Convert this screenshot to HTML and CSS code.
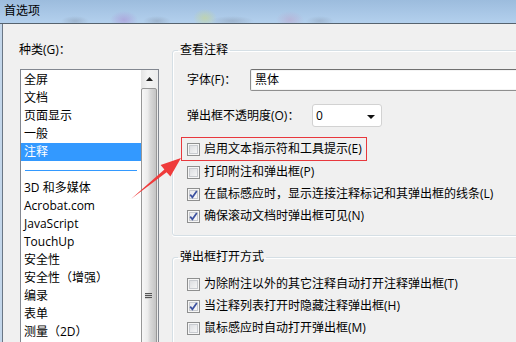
FILE: index.html
```html
<!DOCTYPE html>
<html lang="zh-CN">
<head>
<meta charset="utf-8">
<title>首选项</title>
<link rel="stylesheet" href="styles.css">
</head>
<body>
<div class="window">
  <div class="titlebar"><span class="title">首选项</span></div>
  <div class="frame">
    <div class="left">
      <div class="cat-label">种类(G)：</div>
      <div class="listbox">
        <ul class="items">
          <li>全屏</li>
          <li>文档</li>
          <li>页面显示</li>
          <li>一般</li>
          <li class="selected">注释</li>
          <li class="sep"></li>
          <li>3D 和多媒体</li>
          <li>Acrobat.com</li>
          <li>JavaScript</li>
          <li>TouchUp</li>
          <li>安全性</li>
          <li>安全性（增强）</li>
          <li>编录</li>
          <li>表单</li>
          <li>测量（2D）</li>
        </ul>
        <div class="scrollbar">
          <div class="sb-up"><svg width="7" height="4" viewBox="0 0 7 4"><path d="M0 4 L3.5 0 L7 4 Z" fill="#222"/></svg></div>
          <div class="sb-thumb"><span class="grip"></span></div>
        </div>
      </div>
    </div>
    <div class="right">
      <fieldset class="group">
        <legend>查看注释</legend>
        <div class="field-row">
          <span class="fl fl-font">字体(F)：</span>
          <div class="textbox">黑体</div>
        </div>
        <div class="field-row row-op">
          <span class="fl fl-op">弹出框不透明度(O)：</span>
          <div class="select">0<span class="caret"></span></div>
        </div>
        <div class="highlight">
          <div class="check-row"><span class="cb"></span>启用文本指示符和工具提示(E)</div>
        </div>
        <div class="check-row"><span class="cb"></span>打印附注和弹出框(P)</div>
        <div class="check-row"><span class="cb checked"><svg viewBox="0 0 11 11" width="11" height="11"><path d="M2.2 5.6 L4.4 8.3 L8.8 2" stroke="#3d52a0" stroke-width="1.7" fill="none"/></svg></span>在鼠标感应时，显示连接注释标记和其弹出框的线条(L)</div>
        <div class="check-row"><span class="cb checked"><svg viewBox="0 0 11 11" width="11" height="11"><path d="M2.2 5.6 L4.4 8.3 L8.8 2" stroke="#3d52a0" stroke-width="1.7" fill="none"/></svg></span>确保滚动文档时弹出框可见(N)</div>
      </fieldset>
      <fieldset class="group group2">
        <legend>弹出框打开方式</legend>
        <div class="check-row"><span class="cb"></span>为除附注以外的其它注释自动打开注释弹出框(T)</div>
        <div class="check-row"><span class="cb checked"><svg viewBox="0 0 11 11" width="11" height="11"><path d="M2.2 5.6 L4.4 8.3 L8.8 2" stroke="#3d52a0" stroke-width="1.7" fill="none"/></svg></span>当注释列表打开时隐藏注释弹出框(H)</div>
        <div class="check-row"><span class="cb"></span>鼠标感应时自动打开弹出框(M)</div>
      </fieldset>
    </div>
  </div>
  <svg class="arrow" width="516" height="342" viewBox="0 0 516 342">
    <polygon points="131,199 166.6,172.2 170.4,176.6 181,158 160.6,165 164.4,169.6" fill="#ef3b3b"/>
  </svg>
</div>
</body>
</html>
```
FILE: styles.css
```css
* { box-sizing: border-box; }

body {
  margin: 0;
  width: 516px;
  height: 342px;
  overflow: hidden;
  background: #f0f0f0;
  font-family: "Open Sans", "Noto Sans CJK SC", sans-serif;
  font-size: 12px;
  line-height: 18px;
  color: #000;
}

.window {
  position: relative;
  height: 342px;
}

.titlebar {
  height: 24px;
  border-bottom: 1px solid #56636f;
  padding-left: 4px;
  line-height: 22px;
  background:
    radial-gradient(ellipse 14px 9px at 124px 20px, rgba(170, 140, 210, 0.55), transparent),
    radial-gradient(ellipse 12px 9px at 205px 18px, rgba(200, 215, 140, 0.6), transparent),
    radial-gradient(ellipse 14px 9px at 290px 20px, rgba(190, 160, 200, 0.5), transparent),
    radial-gradient(ellipse 14px 5px at 75px 21px, rgba(120, 130, 150, 0.35), transparent),
    radial-gradient(ellipse 14px 5px at 157px 21px, rgba(120, 130, 150, 0.35), transparent),
    radial-gradient(ellipse 22px 5px at 232px 21px, rgba(120, 130, 150, 0.35), transparent),
    radial-gradient(ellipse 14px 5px at 320px 21px, rgba(120, 130, 150, 0.3), transparent),
    linear-gradient(#9cbcdd, #aac8e7 60%, #b3d0ed);
}

.title { color: #000; }

.frame {
  display: flex;
  height: 318px;
  padding-left: 3px;
  background: linear-gradient(to right, #c3d6ea 0, #c3d6ea 2px, #6a7684 2px, #6a7684 3px, #f0f0f0 3px);
}

.left {
  width: 169px;
  flex: none;
  padding: 17px 0 0 16px;
}

.cat-label { height: 18px; }

.listbox {
  margin: 10px 0 0 1px;
  width: 139px;
  height: 300px;
  border: 1px solid #828790;
  background: #fff;
  display: flex;
  overflow: hidden;
}

.items {
  list-style: none;
  margin: 0;
  padding: 1px 0 0;
  width: 120px;
  flex: none;
}

.items li {
  height: 18px;
  padding-left: 3px;
  white-space: nowrap;
}

.items li.selected {
  background: #3399ff;
  color: #fff;
}

.items li.sep {
  padding: 0;
  margin: 0 4px;
  background: linear-gradient(transparent 9px, #3399ff 9px, #3399ff 10px, transparent 10px);
}

.scrollbar {
  width: 17px;
  flex: none;
  background: linear-gradient(to right, #e4e4e4, #f4f4f4 40%, #ececec);
}

.sb-up {
  height: 17px;
  display: flex;
  align-items: center;
  justify-content: center;
  padding-top: 1px;
}

.sb-thumb {
  margin: 1px 0 0 0;
  width: 16px;
  height: 420px;
  border: 1px solid #979797;
  border-radius: 2px;
  background: linear-gradient(to right, #f7f7f7 0%, #ececec 40%, #d8d8d8 60%, #c4c4c4 100%);
  padding-top: 204px;
}

.grip {
  display: block;
  width: 7px;
  height: 6px;
  margin-left: 3px;
  background: repeating-linear-gradient(#555 0, #555 1px, #d0d0d0 1px, #d0d0d0 2px);
}

.right {
  flex: 1;
  min-width: 0;
  padding-top: 17px;
}

.group {
  width: 380px;
  margin: 0;
  padding: 10px 8px 8px 14px;
  border: 1px solid #d5dfe5;
  border-radius: 3px;
  box-shadow: inset 1px 1px 0 #fff, 0 1px 0 #fff;
}

.group legend {
  padding: 0 2px;
  margin-left: -9px;
  line-height: 18px;
}

.group2 {
  margin-top: 12px;
  padding-top: 7px;
}

.field-row {
  display: flex;
  align-items: center;
  height: 22px;
}

.row-op {
  margin-top: 13px;
  height: 23px;
}

.fl { flex: none; white-space: nowrap; }
.fl-font { width: 63px; }
.fl-op { width: 125px; }

.textbox {
  width: 300px;
  height: 22px;
  border: 1px solid #8f8f8f;
  border-top-color: #707070;
  border-radius: 2px;
  background: #fff;
  box-shadow: inset 0 0 0 1px #f4f4f4;
  padding-left: 4px;
  line-height: 20px;
}

.select {
  position: relative;
  width: 70px;
  height: 23px;
  border: 1px solid #d2d2d2;
  border-radius: 3px;
  background: #fff;
  padding-left: 3px;
  line-height: 21px;
}

.caret {
  position: absolute;
  right: 6px;
  top: 10px;
  width: 0;
  height: 0;
  border-left: 4px solid transparent;
  border-right: 4px solid transparent;
  border-top: 4px solid #111;
}

.highlight {
  margin: 10px 0 0 -6px;
  width: 186px;
  height: 24px;
  border: 1px solid #e8383d;
  padding-left: 5px;
}

.check-row {
  display: flex;
  align-items: center;
  gap: 4px;
  height: 22px;
  white-space: nowrap;
}

.cb {
  flex: none;
  width: 13px;
  height: 13px;
  border: 1px solid #8e8f8f;
  background: linear-gradient(135deg, #d6d8dc, #fbfbfb);
  box-shadow: inset 0 0 0 1px #f6f6f6, inset 0 0 0 2px #c8cbd0;
  display: flex;
  align-items: center;
  justify-content: center;
}

.cb.checked {
  background: linear-gradient(135deg, #e4e5e8, #fcfcfc);
}

.arrow {
  position: absolute;
  left: 0;
  top: 0;
  pointer-events: none;
}
```
